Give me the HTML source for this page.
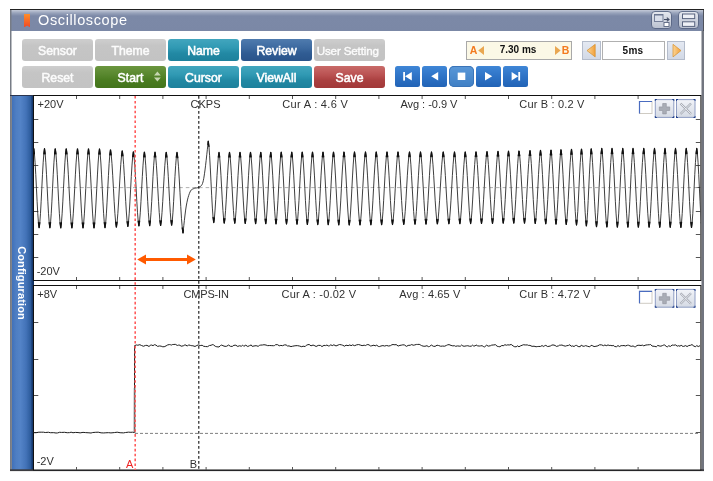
<!DOCTYPE html>
<html><head><meta charset="utf-8"><title>Oscilloscope</title>
<style>
html,body{margin:0;padding:0;background:#fff;}
body{width:713px;height:481px;position:relative;overflow:hidden;font-family:"Liberation Sans",sans-serif;}
.abs{position:absolute;}
#wrap{position:absolute;left:0;top:0;width:713px;height:481px;filter:blur(0.35px);}
#frame{position:absolute;left:10px;top:9px;width:693px;height:462px;background:#fff;}
#title{position:absolute;left:10px;top:9px;width:693px;height:21.5px;background:linear-gradient(#c4cad8 0px,#98a3bb 3px,#7c89a7 6px,#7b88a6 100%);border-top:1px solid #222;box-sizing:border-box;}
#title .txt{position:absolute;left:28px;top:1px;font-size:14.5px;color:#fff;line-height:18px;letter-spacing:0.62px;}
#ticon{position:absolute;left:14px;top:3.6px;width:6.2px;height:13.6px;background:linear-gradient(#ff8e2a,#f04a24);clip-path:polygon(0 0,100% 0,100% 100%,50% 90%,0 100%);}
.btn{position:absolute;width:71px;height:22px;border-radius:3px;color:#fff;font-weight:normal;-webkit-text-stroke:0.55px currentColor;font-size:12.25px;line-height:24px;text-align:center;box-sizing:border-box;}
.gray{background:linear-gradient(#cecece,#c5c5c5 30%,#c3c3c3);color:#fbfbfb;}
.teal{background:linear-gradient(#42a6be 0%,#3099b3 40%,#2289a4 65%,#1d819c 100%);}
.navy{background:linear-gradient(#4f7bae 0%,#3d6aa0 40%,#305c93 65%,#2a548a 100%);}
.green{background:linear-gradient(#6b963f 0%,#58872e 40%,#4a7c20 65%,#43741b 100%);}
.red{background:linear-gradient(#c96b69 0%,#ba5252 40%,#aa4040 65%,#a23838 100%);}
.pb{position:absolute;top:65.5px;width:25px;height:21.5px;border-radius:2.5px;background:linear-gradient(#3f86d6 0%,#2e73c6 50%,#2163b6 100%);}
.lbl{font-size:11px;fill:#303030;font-family:"Liberation Sans",sans-serif;}
</style></head><body>
<div id="wrap">
<div id="frame"></div>
<div id="title"><div id="ticon"></div><div class="txt">Oscilloscope</div></div>

<div class="btn gray" style="left:22px;top:39px">Sensor</div>
<div class="btn gray" style="left:95px;top:39px">Theme</div>
<div class="btn teal" style="left:168px;top:39px">Name</div>
<div class="btn navy" style="left:241px;top:39px">Review</div>
<div class="btn gray" style="left:314px;top:39px;font-size:11.6px;letter-spacing:-0.15px;padding-right:3.5px;-webkit-text-stroke:0.4px currentColor">User Setting</div>
<div class="btn gray" style="left:22px;top:65.5px">Reset</div>
<div class="btn green" style="left:95px;top:65.5px">Start</div>
<div class="btn teal" style="left:168px;top:65.5px">Cursor</div>
<div class="btn teal" style="left:241px;top:65.5px">ViewAll</div>
<div class="btn red" style="left:314px;top:65.5px">Save</div>

<div class="pb" style="left:394.5px"></div>
<div class="pb" style="left:421.8px"></div>
<div class="pb" style="left:449px;border-radius:5px;background:linear-gradient(#5a98d8,#3f7fc4);box-shadow:inset 0 0 0 1px #3a74b8"></div>
<div class="pb" style="left:476px"></div>
<div class="pb" style="left:503.3px"></div>

<div class="abs" style="left:466px;top:41px;width:106px;height:18.5px;box-sizing:border-box;border:1px solid #a9a9a9;background:#fbf8e6"></div>
<div class="abs" style="left:582px;top:41px;width:18.6px;height:18.8px;box-sizing:border-box;border:1px solid #b4bccb;background:linear-gradient(#e4e9f2,#d2d9e6)"></div>
<div class="abs" style="left:602px;top:41px;width:62.7px;height:18.8px;box-sizing:border-box;border:1px solid #b0b0b0;background:#fff"></div>
<div class="abs" style="left:666.8px;top:41px;width:18.6px;height:18.8px;box-sizing:border-box;border:1px solid #b4bccb;background:linear-gradient(#e4e9f2,#d2d9e6)"></div>
<div class="abs" style="left:469.7px;top:42.8px;font-size:10.5px;font-weight:bold;color:#f37a1f;line-height:14px">A</div>
<div class="abs" style="left:561.8px;top:42.8px;font-size:10.5px;font-weight:bold;color:#f37a1f;line-height:14px">B</div>
<div class="abs" style="left:499px;top:43px;width:38px;text-align:center;font-size:10px;font-weight:bold;color:#111;line-height:14px;white-space:nowrap">7.30 ms</div>
<div class="abs" style="left:602px;top:43.6px;width:62px;text-align:center;font-size:10px;font-weight:bold;color:#111;line-height:14px;letter-spacing:0.3px">5ms</div>

<!-- sidebar -->
<div class="abs" style="left:10px;top:95px;width:23.5px;height:376px;background:linear-gradient(90deg,#c4c4c6 0px,#74777e 2px,#4171b9 2.1px,#4e7ec3 6px,#5383c7 10.5px,#4373b8 16px,#2c5b9b 20.8px,#1b4079 21.8px,#0c2c5c 23.5px)"></div>
<div class="abs" style="left:22.3px;top:283.3px;width:0;height:0"><div style="position:absolute;left:-50px;top:-8px;width:100px;height:16px;line-height:16px;text-align:center;transform:rotate(90deg);color:#fff;font-weight:bold;font-size:11px;letter-spacing:0.12px;white-space:nowrap">Configuration</div></div>

<svg class="abs" style="left:0;top:0" width="713" height="481" viewBox="0 0 713 481">
<!-- title icons -->
<defs>
<linearGradient id="ig" x1="0" y1="0" x2="0" y2="1"><stop offset="0" stop-color="#e6e9f0"/><stop offset="0.5" stop-color="#cfd4df"/><stop offset="1" stop-color="#b9c0cf"/></linearGradient>
<linearGradient id="bg2" x1="0" y1="0" x2="0" y2="1"><stop offset="0" stop-color="#f2f4f9"/><stop offset="1" stop-color="#d5dae4"/></linearGradient>
<linearGradient id="og" x1="0" y1="0" x2="1" y2="0"><stop offset="0" stop-color="#fbd596"/><stop offset="1" stop-color="#f2a03a"/></linearGradient>
</defs>
<rect x="651.5" y="11.5" width="20" height="17" rx="3.5" fill="url(#ig)" stroke="#4a5878" stroke-width="0.8"/>
<rect x="678.5" y="11.5" width="20" height="17" rx="3.5" fill="url(#ig)" stroke="#4a5878" stroke-width="0.8"/>
<rect x="654.5" y="14.5" width="8.5" height="7" fill="#d9deea" stroke="#6a7590" stroke-width="0.9"/>
<rect x="654.5" y="14.2" width="8.5" height="1.3" fill="#6a7590"/>
<rect x="664" y="22.5" width="5" height="4" fill="#fff" stroke="#5a6580" stroke-width="0.9"/>
<path d="M664 19.5H668.5M666.8 17.6L669 19.5L666.8 21.4" stroke="#444e66" stroke-width="1.1" fill="none"/>
<rect x="682.5" y="14" width="12.2" height="4.6" fill="#eef0f6" stroke="#5a6580" stroke-width="1"/>
<rect x="682.5" y="21.8" width="12.2" height="4.6" fill="#eef0f6" stroke="#5a6580" stroke-width="1"/>

<!-- frame borders -->
<rect x="10" y="9" width="1.5" height="462" fill="#777c86"/>
<rect x="701.5" y="30.5" width="2.5" height="440.5" fill="#71757f"/><rect x="703" y="9" width="0.9" height="22" fill="#3a3e48"/>
<rect x="10" y="9" width="694" height="1" fill="#222"/>
<rect x="10" y="469.3" width="694" height="1.8" fill="#3c3c40"/>

<!-- playback glyphs -->
<g fill="#fff">
<rect x="403.2" y="72" width="1.8" height="8.6"/><path d="M411.8 72V80.6L405 76.3Z"/>
<path d="M438.2 72V80.6L431.2 76.3Z"/>
<rect x="457.7" y="72.6" width="7.6" height="7.4"/>
<path d="M485 72V80.6L492.2 76.3Z"/>
<path d="M511.6 72V80.6L518.2 76.3Z"/><rect x="518.3" y="72" width="1.8" height="8.6"/>
</g>
<!-- small triangles -->
<path d="M484 46V55L478.2 50.5Z" fill="#e9a752"/>
<path d="M555 46V55L560.6 50.5Z" fill="#e9a752"/>
<path d="M595.2 44.3V56.9L587 50.6Z" fill="url(#og)" stroke="#d6902e" stroke-width="0.7"/>
<path d="M673 44.3V56.9L681 50.6Z" fill="url(#og)" stroke="#d6902e" stroke-width="0.7"/>
<!-- start up/down -->
<path d="M154 75.5L157.4 71.5L160.8 75.5Z M154 77.5L157.4 81.5L160.8 77.5Z" fill="#c5d6b0"/>

<rect x="10" y="95" width="23.5" height="1" fill="#2a3550"/>
<!-- plots -->
<rect x="33.5" y="95.5" width="667.4" height="185" fill="#fff" stroke="#111" stroke-width="1"/>
<rect x="33.5" y="285.5" width="667.4" height="184.5" fill="#fff" stroke="#111" stroke-width="1"/>
<path d="M76.5 96V99M76.5 277V280M76.5 286V289M76.5 467V470M119.7 96V99M119.7 277V280M119.7 286V289M119.7 467V470M162.9 96V99M162.9 277V280M162.9 286V289M162.9 467V470M206.1 96V99M206.1 277V280M206.1 286V289M206.1 467V470M249.3 96V99M249.3 277V280M249.3 286V289M249.3 467V470M292.5 96V99M292.5 277V280M292.5 286V289M292.5 467V470M335.7 96V99M335.7 277V280M335.7 286V289M335.7 467V470M378.9 96V99M378.9 277V280M378.9 286V289M378.9 467V470M422.1 96V99M422.1 277V280M422.1 286V289M422.1 467V470M465.3 96V99M465.3 277V280M465.3 286V289M465.3 467V470M508.5 96V99M508.5 277V280M508.5 286V289M508.5 467V470M551.7 96V99M551.7 277V280M551.7 286V289M551.7 467V470M594.9 96V99M594.9 277V280M594.9 286V289M594.9 467V470M638.1 96V99M638.1 277V280M638.1 286V289M638.1 467V470M34 119.5H38.3M695.8 119.5H700.5M34 142.5H38.3M695.8 142.5H700.5M34 165.5H38.3M695.8 165.5H700.5M34 187.5H38.3M695.8 187.5H700.5M34 211.5H38.3M695.8 211.5H700.5M34 234.5H38.3M695.8 234.5H700.5M34 257.5H38.3M695.8 257.5H700.5M34 322.5H38.3M695.8 322.5H700.5M34 359.5H38.3M695.8 359.5H700.5M34 395.5H38.3M695.8 395.5H700.5M34 432.5H38.3M695.8 432.5H700.5" stroke="#555" stroke-width="1" fill="none"/>
<path d="M34 187.6H700" stroke="#a8a8a8" stroke-width="0.9" stroke-dasharray="3.6 3" fill="none"/>
<path d="M135 433.4H700" stroke="#606060" stroke-width="0.8" stroke-dasharray="3 2" fill="none"/>

<clipPath id="c1"><rect x="33.5" y="96" width="667" height="184"/></clipPath>
<path d="M22.90 149.00 L23.57 154.04 L24.25 162.93 L24.93 174.79 L25.60 188.25 L26.27 201.71 L26.95 213.57 L27.62 222.46 L28.30 227.50 L28.98 222.44 L29.66 213.51 L30.34 201.60 L31.02 188.08 L31.71 174.57 L32.39 162.66 L33.07 153.73 L33.75 148.67 L34.42 153.74 L35.09 162.70 L35.77 174.63 L36.44 188.18 L37.11 201.73 L37.78 213.67 L38.45 222.63 L39.12 227.70 L39.80 222.63 L40.47 213.68 L41.14 201.75 L41.81 188.21 L42.48 174.67 L43.16 162.74 L43.83 153.79 L44.50 148.72 L45.17 153.79 L45.84 162.75 L46.52 174.69 L47.19 188.24 L47.86 201.78 L48.53 213.72 L49.20 222.68 L49.88 227.75 L50.55 222.68 L51.22 213.73 L51.89 201.80 L52.56 188.26 L53.23 174.72 L53.91 162.79 L54.58 153.84 L55.25 148.78 L55.94 153.85 L56.62 162.80 L57.31 174.74 L58.00 188.29 L58.69 201.84 L59.38 213.78 L60.06 222.73 L60.75 227.80 L61.44 222.74 L62.12 213.79 L62.81 201.86 L63.50 188.32 L64.19 174.78 L64.88 162.85 L65.56 153.90 L66.25 148.83 L66.95 153.90 L67.66 162.86 L68.36 174.80 L69.06 188.35 L69.77 201.89 L70.47 213.83 L71.17 222.79 L71.88 227.86 L72.58 222.79 L73.28 213.84 L73.98 201.91 L74.69 188.37 L75.39 174.83 L76.09 162.91 L76.80 153.95 L77.50 148.89 L78.19 153.96 L78.88 162.92 L79.56 174.85 L80.25 188.40 L80.94 201.95 L81.62 213.89 L82.31 222.85 L83.00 227.91 L83.69 222.85 L84.38 213.90 L85.06 201.97 L85.75 188.43 L86.44 174.89 L87.12 162.96 L87.81 154.01 L88.50 148.94 L89.19 154.01 L89.88 162.97 L90.56 174.91 L91.25 188.46 L91.94 202.00 L92.62 213.94 L93.31 222.90 L94.00 227.97 L94.69 222.90 L95.38 213.95 L96.06 202.02 L96.75 188.48 L97.44 174.94 L98.12 163.02 L98.81 154.06 L99.50 149.00 L100.19 154.05 L100.88 162.97 L101.56 174.86 L102.25 188.36 L102.94 201.85 L103.62 213.74 L104.31 222.67 L105.00 227.71 L105.69 222.72 L106.38 213.90 L107.06 202.15 L107.75 188.81 L108.44 175.47 L109.12 163.71 L109.81 154.89 L110.50 149.90 L111.23 154.85 L111.97 163.60 L112.70 175.25 L113.44 188.48 L114.17 201.71 L114.91 213.37 L115.64 222.11 L116.38 227.06 L117.11 222.18 L117.84 213.55 L118.58 202.04 L119.31 188.99 L120.05 175.93 L120.78 164.43 L121.52 155.79 L122.25 150.91 L122.95 155.75 L123.64 164.31 L124.34 175.71 L125.04 188.66 L125.73 201.60 L126.43 213.01 L127.13 221.57 L127.83 226.41 L128.52 221.63 L129.22 213.18 L129.92 201.92 L130.61 189.14 L131.31 176.36 L132.01 165.10 L132.70 156.64 L133.40 151.86 L134.09 156.61 L134.78 165.01 L135.46 176.19 L136.15 188.89 L136.84 201.58 L137.53 212.77 L138.21 221.16 L138.90 225.91 L139.59 221.18 L140.28 212.81 L140.96 201.66 L141.65 189.01 L142.34 176.36 L143.03 165.21 L143.71 156.84 L144.40 152.10 L145.06 156.82 L145.72 165.16 L146.39 176.28 L147.05 188.89 L147.71 201.50 L148.38 212.61 L149.04 220.95 L149.70 225.67 L150.36 220.96 L151.02 212.63 L151.69 201.54 L152.35 188.95 L153.01 176.36 L153.68 165.26 L154.34 156.93 L155.00 152.22 L155.70 156.92 L156.41 165.22 L157.11 176.28 L157.81 188.83 L158.52 201.38 L159.22 212.44 L159.92 220.73 L160.62 225.43 L161.33 220.74 L162.03 212.46 L162.73 201.42 L163.44 188.89 L164.14 176.36 L164.84 165.32 L165.55 157.03 L166.25 152.35 L166.92 157.02 L167.59 165.28 L168.27 176.28 L168.94 188.77 L169.61 201.25 L170.28 212.26 L170.95 220.51 L171.62 225.19 L172.30 220.52 L172.97 212.28 L173.64 201.29 L174.31 188.83 L174.98 176.36 L175.66 165.38 L176.33 157.13 L177.00 152.47 L177.75 157.66 L178.50 166.79 L179.25 178.95 L180.00 192.75 L180.75 206.55 L181.50 218.71 L182.25 227.84 L183.00 233.00 L183.35 229.91 L183.82 225.52 L184.39 220.38 L185.01 215.04 L185.64 210.06 L186.25 206.00 L186.85 202.79 L187.46 199.98 L188.09 197.53 L188.73 195.40 L189.37 193.57 L190.00 192.00 L190.61 190.80 L191.20 190.00 L191.80 189.51 L192.41 189.19 L193.05 188.92 L193.75 188.60 L194.53 188.29 L195.37 188.10 L196.25 187.98 L197.13 187.84 L197.97 187.64 L198.75 187.30 L199.46 186.92 L200.14 186.58 L200.78 186.16 L201.39 185.58 L201.96 184.72 L202.50 183.50 L202.98 181.99 L203.40 180.28 L203.78 178.31 L204.16 175.99 L204.55 173.24 L205.00 170.00 L205.54 165.76 L206.15 160.48 L206.78 154.78 L207.38 149.27 L207.89 144.55 L208.25 141.25 L208.94 146.46 L209.62 155.67 L210.31 167.95 L211.00 181.88 L211.69 195.80 L212.38 208.08 L213.06 217.29 L213.75 222.50 L214.41 218.01 L215.06 210.07 L215.72 199.50 L216.38 187.50 L217.03 175.50 L217.69 164.93 L218.34 156.99 L219.00 152.50 L219.66 157.03 L220.31 165.03 L220.97 175.69 L221.62 187.78 L222.28 199.88 L222.94 210.54 L223.59 218.54 L224.25 223.07 L224.91 218.54 L225.56 210.53 L226.22 199.87 L226.88 187.76 L227.53 175.66 L228.19 165.00 L228.84 156.99 L229.50 152.46 L230.16 157.00 L230.81 165.02 L231.47 175.71 L232.12 187.85 L232.78 199.98 L233.44 210.67 L234.09 218.69 L234.75 223.23 L235.41 218.69 L236.06 210.66 L236.72 199.96 L237.38 187.83 L238.03 175.69 L238.69 164.99 L239.34 156.96 L240.00 152.42 L240.66 156.97 L241.31 165.02 L241.97 175.74 L242.62 187.91 L243.28 200.07 L243.94 210.79 L244.59 218.84 L245.25 223.39 L245.91 218.83 L246.56 210.78 L247.22 200.06 L247.88 187.89 L248.53 175.71 L249.19 164.99 L249.84 156.94 L250.50 152.38 L251.14 156.95 L251.78 165.02 L252.42 175.76 L253.06 187.97 L253.70 200.17 L254.34 210.92 L254.98 218.98 L255.62 223.55 L256.27 218.98 L256.91 210.91 L257.55 200.15 L258.19 187.95 L258.83 175.74 L259.47 164.98 L260.11 156.91 L260.75 152.34 L261.38 156.92 L262.00 165.01 L262.62 175.79 L263.25 188.02 L263.88 200.26 L264.50 211.04 L265.12 219.13 L265.75 223.70 L266.38 219.12 L267.00 211.03 L267.62 200.24 L268.25 188.00 L268.88 175.76 L269.50 164.98 L270.12 156.88 L270.75 152.30 L271.41 156.89 L272.06 165.01 L272.72 175.82 L273.38 188.08 L274.03 200.35 L274.69 211.16 L275.34 219.27 L276.00 223.86 L276.66 219.27 L277.31 211.15 L277.97 200.34 L278.62 188.06 L279.28 175.79 L279.94 164.97 L280.59 156.86 L281.25 152.26 L281.91 156.87 L282.56 165.00 L283.22 175.84 L283.88 188.14 L284.53 200.45 L285.19 211.29 L285.84 219.42 L286.50 224.02 L287.16 219.42 L287.81 211.28 L288.47 200.43 L289.12 188.12 L289.78 175.81 L290.44 164.97 L291.09 156.83 L291.75 152.22 L292.41 156.84 L293.06 165.00 L293.72 175.87 L294.38 188.20 L295.03 200.54 L295.69 211.41 L296.34 219.57 L297.00 224.18 L297.66 219.57 L298.31 211.40 L298.97 200.53 L299.62 188.18 L300.28 175.84 L300.94 164.96 L301.59 156.80 L302.25 152.18 L302.89 156.81 L303.53 164.99 L304.17 175.89 L304.81 188.26 L305.45 200.64 L306.09 211.53 L306.73 219.72 L307.38 224.34 L308.02 219.71 L308.66 211.53 L309.30 200.62 L309.94 188.24 L310.58 175.87 L311.22 164.96 L311.86 156.78 L312.50 152.14 L313.16 156.79 L313.81 164.99 L314.47 175.92 L315.12 188.32 L315.78 200.73 L316.44 211.66 L317.09 219.86 L317.75 224.50 L318.41 219.86 L319.06 211.65 L319.72 200.72 L320.38 188.30 L321.03 175.89 L321.69 164.96 L322.34 156.75 L323.00 152.10 L323.66 156.76 L324.31 164.98 L324.97 175.94 L325.62 188.38 L326.28 200.82 L326.94 211.78 L327.59 220.01 L328.25 224.67 L328.91 220.01 L329.56 211.78 L330.22 200.81 L330.88 188.36 L331.53 175.92 L332.19 164.95 L332.84 156.72 L333.50 152.06 L334.16 156.73 L334.81 164.98 L335.47 175.97 L336.12 188.45 L336.78 200.92 L337.44 211.91 L338.09 220.16 L338.75 224.83 L339.41 220.16 L340.06 211.90 L340.72 200.91 L341.38 188.43 L342.03 175.94 L342.69 164.95 L343.34 156.69 L344.00 152.02 L344.66 156.70 L345.31 164.98 L345.97 176.00 L346.62 188.51 L347.28 201.01 L347.94 212.04 L348.59 220.31 L349.25 224.99 L349.91 220.31 L350.56 212.03 L351.22 201.01 L351.88 188.49 L352.53 175.98 L353.19 164.96 L353.84 156.68 L354.50 152.00 L355.19 156.67 L355.88 164.94 L356.56 175.94 L357.25 188.44 L357.94 200.93 L358.62 211.94 L359.31 220.20 L360.00 224.88 L360.69 220.20 L361.38 211.94 L362.06 200.93 L362.75 188.44 L363.44 175.94 L364.12 164.94 L364.81 156.67 L365.50 152.00 L366.17 156.67 L366.84 164.91 L367.52 175.90 L368.19 188.37 L368.86 200.84 L369.53 211.83 L370.20 220.07 L370.88 224.74 L371.55 220.07 L372.22 211.83 L372.89 200.84 L373.56 188.37 L374.23 175.90 L374.91 164.91 L375.58 156.67 L376.25 152.00 L376.92 156.66 L377.59 164.89 L378.27 175.86 L378.94 188.30 L379.61 200.75 L380.28 211.72 L380.95 219.95 L381.62 224.60 L382.30 219.95 L382.97 211.72 L383.64 200.75 L384.31 188.30 L384.98 175.86 L385.66 164.89 L386.33 156.66 L387.00 152.00 L387.69 156.65 L388.38 164.86 L389.06 175.81 L389.75 188.23 L390.44 200.66 L391.12 211.60 L391.81 219.82 L392.50 224.47 L393.19 219.82 L393.88 211.60 L394.56 200.66 L395.25 188.23 L395.94 175.81 L396.62 164.86 L397.31 156.65 L398.00 152.00 L398.72 156.64 L399.44 164.84 L400.16 175.76 L400.88 188.16 L401.59 200.56 L402.31 211.49 L403.03 219.69 L403.75 224.33 L404.47 219.69 L405.19 211.49 L405.91 200.56 L406.62 188.16 L407.34 175.76 L408.06 164.84 L408.78 156.64 L409.50 152.00 L410.19 156.63 L410.88 164.81 L411.56 175.72 L412.25 188.09 L412.94 200.47 L413.62 211.37 L414.31 219.56 L415.00 224.19 L415.69 219.56 L416.38 211.37 L417.06 200.47 L417.75 188.09 L418.44 175.72 L419.12 164.81 L419.81 156.63 L420.50 152.00 L421.19 156.62 L421.88 164.79 L422.56 175.67 L423.25 188.03 L423.94 200.38 L424.62 211.26 L425.31 219.43 L426.00 224.05 L426.69 219.43 L427.38 211.26 L428.06 200.38 L428.75 188.03 L429.44 175.67 L430.12 164.79 L430.81 156.62 L431.50 152.00 L432.23 156.61 L432.97 164.76 L433.70 175.63 L434.44 187.95 L435.17 200.28 L435.91 211.14 L436.64 219.30 L437.38 223.91 L438.11 219.30 L438.84 211.14 L439.58 200.28 L440.31 187.95 L441.05 175.63 L441.78 164.76 L442.52 156.61 L443.25 152.00 L443.95 156.60 L444.66 164.74 L445.36 175.58 L446.06 187.88 L446.77 200.19 L447.47 211.03 L448.17 219.16 L448.88 223.76 L449.58 219.16 L450.28 211.03 L450.98 200.19 L451.69 187.88 L452.39 175.58 L453.09 164.74 L453.80 156.60 L454.50 152.00 L455.17 156.59 L455.84 164.71 L456.52 175.53 L457.19 187.81 L457.86 200.09 L458.53 210.91 L459.20 219.03 L459.88 223.63 L460.55 219.03 L461.22 210.91 L461.89 200.09 L462.56 187.81 L463.23 175.53 L463.91 164.71 L464.58 156.59 L465.25 152.00 L465.92 156.59 L466.59 164.69 L467.27 175.49 L467.94 187.75 L468.61 200.00 L469.28 210.80 L469.95 218.91 L470.62 223.49 L471.30 218.90 L471.97 210.78 L472.64 199.96 L473.31 187.69 L473.98 175.41 L474.66 164.59 L475.33 156.47 L476.00 151.88 L476.69 156.47 L477.38 164.57 L478.06 175.37 L478.75 187.63 L479.44 199.89 L480.12 210.69 L480.81 218.80 L481.50 223.38 L482.19 218.78 L482.88 210.65 L483.56 199.82 L484.25 187.52 L484.94 175.23 L485.62 164.39 L486.31 156.26 L487.00 151.66 L487.69 156.25 L488.38 164.37 L489.06 175.19 L489.75 187.47 L490.44 199.75 L491.12 210.56 L491.81 218.68 L492.50 223.28 L493.19 218.67 L493.88 210.52 L494.56 199.67 L495.25 187.36 L495.94 175.04 L496.62 164.19 L497.31 156.05 L498.00 151.44 L498.66 156.04 L499.31 164.17 L499.97 175.01 L500.62 187.30 L501.28 199.60 L501.94 210.43 L502.59 218.57 L503.25 223.17 L503.91 218.55 L504.56 210.40 L505.22 199.53 L505.88 187.20 L506.53 174.87 L507.19 164.00 L507.84 155.84 L508.50 151.23 L509.16 155.84 L509.81 163.98 L510.47 174.83 L511.12 187.15 L511.78 199.46 L512.44 210.31 L513.09 218.46 L513.75 223.06 L514.41 218.44 L515.06 210.27 L515.72 199.39 L516.38 187.04 L517.03 174.69 L517.69 163.81 L518.34 155.64 L519.00 151.02 L519.69 155.65 L520.38 163.82 L521.06 174.71 L521.75 187.08 L522.44 199.44 L523.12 210.33 L523.81 218.51 L524.50 223.13 L525.19 218.49 L525.88 210.28 L526.56 199.34 L527.25 186.92 L527.94 174.50 L528.62 163.56 L529.31 155.35 L530.00 150.70 L530.66 155.37 L531.31 163.62 L531.97 174.61 L532.62 187.08 L533.28 199.55 L533.94 210.54 L534.59 218.79 L535.25 223.46 L535.91 218.77 L536.56 210.49 L537.22 199.45 L537.88 186.92 L538.53 174.39 L539.19 163.36 L539.84 155.07 L540.50 150.38 L541.16 155.09 L541.81 163.41 L542.47 174.50 L543.12 187.08 L543.78 199.66 L544.44 210.75 L545.09 219.07 L545.75 223.77 L546.41 219.05 L547.06 210.69 L547.72 199.56 L548.38 186.92 L549.03 174.29 L549.69 163.15 L550.34 154.80 L551.00 150.07 L551.62 154.82 L552.25 163.21 L552.88 174.39 L553.50 187.07 L554.12 199.76 L554.75 210.94 L555.38 219.33 L556.00 224.08 L556.62 219.31 L557.25 210.89 L557.88 199.66 L558.50 186.93 L559.12 174.19 L559.75 162.96 L560.38 154.54 L561.00 149.77 L561.66 154.56 L562.31 163.02 L562.97 174.29 L563.62 187.08 L564.28 199.87 L564.94 211.14 L565.59 219.60 L566.25 224.39 L566.91 219.58 L567.56 211.09 L568.22 199.77 L568.88 186.92 L569.53 174.07 L570.19 162.75 L570.84 154.26 L571.50 149.45 L572.12 154.30 L572.75 162.87 L573.38 174.29 L574.00 187.25 L574.62 200.21 L575.25 211.62 L575.88 220.19 L576.50 225.04 L577.12 220.17 L577.75 211.56 L578.38 200.10 L579.00 187.08 L579.62 174.06 L580.25 162.59 L580.88 153.99 L581.50 149.12 L582.11 154.04 L582.72 162.74 L583.33 174.33 L583.94 187.49 L584.55 200.65 L585.16 212.24 L585.77 220.94 L586.38 225.86 L586.98 220.92 L587.59 212.18 L588.20 200.54 L588.81 187.33 L589.42 174.11 L590.03 162.47 L590.64 153.74 L591.25 148.79 L591.91 153.79 L592.56 162.62 L593.22 174.39 L593.88 187.75 L594.53 201.11 L595.19 212.88 L595.84 221.71 L596.50 226.71 L597.16 221.69 L597.81 212.83 L598.47 201.01 L599.12 187.60 L599.78 174.20 L600.44 162.38 L601.09 153.52 L601.75 148.50 L602.39 153.54 L603.03 162.44 L603.67 174.30 L604.31 187.76 L604.95 201.23 L605.59 213.09 L606.23 221.99 L606.88 227.03 L607.52 221.99 L608.16 213.09 L608.80 201.23 L609.44 187.76 L610.08 174.30 L610.72 162.44 L611.36 153.54 L612.00 148.50 L612.67 153.54 L613.34 162.45 L614.02 174.32 L614.69 187.79 L615.36 201.26 L616.03 213.12 L616.70 222.03 L617.38 227.07 L618.05 222.03 L618.72 213.12 L619.39 201.26 L620.06 187.79 L620.73 174.32 L621.41 162.45 L622.08 153.54 L622.75 148.50 L623.39 153.54 L624.03 162.46 L624.67 174.33 L625.31 187.81 L625.95 201.29 L626.59 213.16 L627.23 222.07 L627.88 227.12 L628.52 222.07 L629.16 213.16 L629.80 201.29 L630.44 187.81 L631.08 174.33 L631.72 162.46 L632.36 153.54 L633.00 148.50 L633.67 153.55 L634.34 162.46 L635.02 174.34 L635.69 187.83 L636.36 201.32 L637.03 213.20 L637.70 222.11 L638.38 227.16 L639.05 222.11 L639.72 213.20 L640.39 201.32 L641.06 187.83 L641.73 174.34 L642.41 162.46 L643.08 153.55 L643.75 148.50 L644.42 153.55 L645.09 162.47 L645.77 174.36 L646.44 187.85 L647.11 201.35 L647.78 213.23 L648.45 222.16 L649.12 227.20 L649.80 222.16 L650.47 213.23 L651.14 201.35 L651.81 187.85 L652.48 174.36 L653.16 162.47 L653.83 153.55 L654.50 148.50 L655.16 153.55 L655.81 162.48 L656.47 174.37 L657.12 187.87 L657.78 201.38 L658.44 213.27 L659.09 222.20 L659.75 227.25 L660.41 222.20 L661.06 213.27 L661.72 201.38 L662.38 187.87 L663.03 174.37 L663.69 162.48 L664.34 153.55 L665.00 148.50 L665.66 153.55 L666.31 162.49 L666.97 174.39 L667.62 187.90 L668.28 201.40 L668.94 213.31 L669.59 222.24 L670.25 227.29 L670.91 222.24 L671.56 213.31 L672.22 201.40 L672.88 187.90 L673.53 174.39 L674.19 162.49 L674.84 153.55 L675.50 148.50 L676.17 153.56 L676.84 162.49 L677.52 174.40 L678.19 187.92 L678.86 201.43 L679.53 213.34 L680.20 222.28 L680.88 227.34 L681.55 222.28 L682.22 213.34 L682.89 201.43 L683.56 187.92 L684.23 174.40 L684.91 162.49 L685.58 153.56 L686.25 148.50 L686.91 153.56 L687.56 162.50 L688.22 174.42 L688.88 187.94 L689.53 201.46 L690.19 213.38 L690.84 222.32 L691.50 227.38 L692.16 222.32 L692.81 213.38 L693.47 201.46 L694.12 187.94 L694.78 174.42 L695.44 162.50 L696.09 153.56 L696.75 148.50 L697.41 153.56 L698.07 162.51 L698.73 174.43 L699.39 187.96 L700.05 201.49 L700.71 213.41 L701.37 222.36 L702.02 227.43 L702.68 222.36 L703.34 213.41 L704.00 201.49 L704.66 187.96 L705.32 174.43 L705.98 162.51 L706.64 153.56 L707.30 148.50" clip-path="url(#c1)" stroke="#242424" stroke-width="0.88" fill="none" stroke-linejoin="round"/>
<path d="M27.62 222.46L28.30 227.50L28.98 222.44M33.07 153.73L33.75 148.67L34.42 153.74M38.45 222.63L39.12 227.70L39.80 222.63M43.83 153.79L44.50 148.72L45.17 153.79M49.20 222.68L49.88 227.75L50.55 222.68M54.58 153.84L55.25 148.78L55.94 153.85M60.06 222.73L60.75 227.80L61.44 222.74M65.56 153.90L66.25 148.83L66.95 153.90M71.17 222.79L71.88 227.86L72.58 222.79M76.80 153.95L77.50 148.89L78.19 153.96M82.31 222.85L83.00 227.91L83.69 222.85M87.81 154.01L88.50 148.94L89.19 154.01M93.31 222.90L94.00 227.97L94.69 222.90M98.81 154.06L99.50 149.00L100.19 154.05M104.31 222.67L105.00 227.71L105.69 222.72M109.81 154.89L110.50 149.90L111.23 154.85M115.64 222.11L116.38 227.06L117.11 222.18M121.52 155.79L122.25 150.91L122.95 155.75M127.13 221.57L127.83 226.41L128.52 221.63M132.70 156.64L133.40 151.86L134.09 156.61M138.21 221.16L138.90 225.91L139.59 221.18M143.71 156.84L144.40 152.10L145.06 156.82M149.04 220.95L149.70 225.67L150.36 220.96M154.34 156.93L155.00 152.22L155.70 156.92M159.92 220.73L160.62 225.43L161.33 220.74M165.55 157.03L166.25 152.35L166.92 157.02M170.95 220.51L171.62 225.19L172.30 220.52M176.33 157.13L177.00 152.47L177.75 157.66M182.25 227.84L183.00 233.00L183.35 229.91M207.89 144.55L208.25 141.25L208.94 146.46M213.06 217.29L213.75 222.50L214.41 218.01M218.34 156.99L219.00 152.50L219.66 157.03M223.59 218.54L224.25 223.07L224.91 218.54M228.84 156.99L229.50 152.46L230.16 157.00M234.09 218.69L234.75 223.23L235.41 218.69M239.34 156.96L240.00 152.42L240.66 156.97M244.59 218.84L245.25 223.39L245.91 218.83M249.84 156.94L250.50 152.38L251.14 156.95M254.98 218.98L255.62 223.55L256.27 218.98M260.11 156.91L260.75 152.34L261.38 156.92M265.12 219.13L265.75 223.70L266.38 219.12M270.12 156.88L270.75 152.30L271.41 156.89M275.34 219.27L276.00 223.86L276.66 219.27M280.59 156.86L281.25 152.26L281.91 156.87M285.84 219.42L286.50 224.02L287.16 219.42M291.09 156.83L291.75 152.22L292.41 156.84M296.34 219.57L297.00 224.18L297.66 219.57M301.59 156.80L302.25 152.18L302.89 156.81M306.73 219.72L307.38 224.34L308.02 219.71M311.86 156.78L312.50 152.14L313.16 156.79M317.09 219.86L317.75 224.50L318.41 219.86M322.34 156.75L323.00 152.10L323.66 156.76M327.59 220.01L328.25 224.67L328.91 220.01M332.84 156.72L333.50 152.06L334.16 156.73M338.09 220.16L338.75 224.83L339.41 220.16M343.34 156.69L344.00 152.02L344.66 156.70M348.59 220.31L349.25 224.99L349.91 220.31M353.84 156.68L354.50 152.00L355.19 156.67M359.31 220.20L360.00 224.88L360.69 220.20M364.81 156.67L365.50 152.00L366.17 156.67M370.20 220.07L370.88 224.74L371.55 220.07M375.58 156.67L376.25 152.00L376.92 156.66M380.95 219.95L381.62 224.60L382.30 219.95M386.33 156.66L387.00 152.00L387.69 156.65M391.81 219.82L392.50 224.47L393.19 219.82M397.31 156.65L398.00 152.00L398.72 156.64M403.03 219.69L403.75 224.33L404.47 219.69M408.78 156.64L409.50 152.00L410.19 156.63M414.31 219.56L415.00 224.19L415.69 219.56M419.81 156.63L420.50 152.00L421.19 156.62M425.31 219.43L426.00 224.05L426.69 219.43M430.81 156.62L431.50 152.00L432.23 156.61M436.64 219.30L437.38 223.91L438.11 219.30M442.52 156.61L443.25 152.00L443.95 156.60M448.17 219.16L448.88 223.76L449.58 219.16M453.80 156.60L454.50 152.00L455.17 156.59M459.20 219.03L459.88 223.63L460.55 219.03M464.58 156.59L465.25 152.00L465.92 156.59M469.95 218.91L470.62 223.49L471.30 218.90M475.33 156.47L476.00 151.88L476.69 156.47M480.81 218.80L481.50 223.38L482.19 218.78M486.31 156.26L487.00 151.66L487.69 156.25M491.81 218.68L492.50 223.28L493.19 218.67M497.31 156.05L498.00 151.44L498.66 156.04M502.59 218.57L503.25 223.17L503.91 218.55M507.84 155.84L508.50 151.23L509.16 155.84M513.09 218.46L513.75 223.06L514.41 218.44M518.34 155.64L519.00 151.02L519.69 155.65M523.81 218.51L524.50 223.13L525.19 218.49M529.31 155.35L530.00 150.70L530.66 155.37M534.59 218.79L535.25 223.46L535.91 218.77M539.84 155.07L540.50 150.38L541.16 155.09M545.09 219.07L545.75 223.77L546.41 219.05M550.34 154.80L551.00 150.07L551.62 154.82M555.38 219.33L556.00 224.08L556.62 219.31M560.38 154.54L561.00 149.77L561.66 154.56M565.59 219.60L566.25 224.39L566.91 219.58M570.84 154.26L571.50 149.45L572.12 154.30M575.88 220.19L576.50 225.04L577.12 220.17M580.88 153.99L581.50 149.12L582.11 154.04M585.77 220.94L586.38 225.86L586.98 220.92M590.64 153.74L591.25 148.79L591.91 153.79M595.84 221.71L596.50 226.71L597.16 221.69M601.09 153.52L601.75 148.50L602.39 153.54M606.23 221.99L606.88 227.03L607.52 221.99M611.36 153.54L612.00 148.50L612.67 153.54M616.70 222.03L617.38 227.07L618.05 222.03M622.08 153.54L622.75 148.50L623.39 153.54M627.23 222.07L627.88 227.12L628.52 222.07M632.36 153.54L633.00 148.50L633.67 153.55M637.70 222.11L638.38 227.16L639.05 222.11M643.08 153.55L643.75 148.50L644.42 153.55M648.45 222.16L649.12 227.20L649.80 222.16M653.83 153.55L654.50 148.50L655.16 153.55M659.09 222.20L659.75 227.25L660.41 222.20M664.34 153.55L665.00 148.50L665.66 153.55M669.59 222.24L670.25 227.29L670.91 222.24M674.84 153.55L675.50 148.50L676.17 153.56M680.20 222.28L680.88 227.34L681.55 222.28M685.58 153.56L686.25 148.50L686.91 153.56M690.84 222.32L691.50 227.38L692.16 222.32M696.09 153.56L696.75 148.50L697.41 153.56M701.37 222.36L702.02 227.43L702.68 222.36" clip-path="url(#c1)" stroke="#101010" stroke-width="1.3" fill="none" stroke-linejoin="round" stroke-linecap="round"/>
<path d="M33.00 432.44 L34.80 432.74 L36.45 432.63 L38.68 432.20 L41.19 432.18 L43.56 432.21 L45.24 432.53 L48.40 432.26 L50.34 432.71 L53.74 432.67 L56.03 433.03 L57.62 432.92 L59.70 432.28 L61.44 432.43 L64.57 432.31 L67.23 432.73 L69.48 432.64 L71.10 432.20 L73.02 432.76 L75.37 432.43 L78.04 432.56 L80.14 432.86 L83.04 432.37 L85.69 432.62 L88.94 432.81 L91.02 433.03 L92.75 432.53 L95.77 432.29 L98.24 432.19 L101.08 432.84 L103.73 432.94 L105.85 432.78 L108.54 432.67 L110.95 432.91 L114.34 432.58 L117.17 432.20 L120.08 432.73 L123.56 432.89 L125.63 432.50 L128.47 432.17 L130.89 432.30 L132.63 432.20 L134.40 432.60 L134.60 345.60 L136.50 344.96 L137.80 345.22 L139.84 344.69 L141.38 345.45 L143.44 346.25 L145.48 345.45 L146.98 345.33 L149.04 346.49 L150.22 345.33 L151.50 345.04 L153.08 345.65 L154.39 344.69 L155.90 345.08 L157.58 346.39 L159.41 345.97 L161.15 346.15 L162.21 346.66 L164.15 346.78 L166.11 345.86 L167.58 344.96 L169.34 344.57 L170.43 344.72 L171.62 345.04 L172.68 344.47 L173.87 344.47 L175.30 344.32 L177.35 345.45 L178.53 345.12 L179.95 345.22 L181.09 346.23 L183.28 345.82 L184.87 344.91 L185.99 345.11 L187.31 346.15 L188.50 344.90 L190.64 345.48 L191.82 345.71 L192.85 345.76 L195.02 346.45 L196.86 345.48 L198.30 344.96 L200.23 345.51 L202.16 345.29 L203.43 346.18 L205.61 346.57 L207.58 346.64 L209.46 345.48 L211.09 345.34 L212.12 344.63 L213.46 344.84 L215.29 346.31 L216.82 346.79 L219.01 346.99 L220.45 345.59 L221.72 345.06 L222.96 345.72 L225.04 346.39 L226.62 346.25 L228.58 345.06 L230.37 346.30 L232.31 346.41 L233.88 345.31 L235.83 345.23 L237.79 346.48 L239.27 345.77 L241.40 346.18 L242.61 345.12 L243.79 346.31 L245.76 345.20 L247.75 346.49 L249.54 345.68 L251.20 344.95 L252.21 346.38 L253.99 345.99 L256.11 345.67 L258.16 346.34 L259.41 345.43 L260.76 345.09 L262.47 345.00 L263.97 344.72 L266.06 345.06 L267.61 345.64 L269.70 345.52 L271.80 345.64 L273.44 345.73 L274.46 345.59 L275.68 344.67 L277.64 344.68 L279.21 345.79 L280.87 345.39 L282.50 345.70 L284.44 344.91 L286.11 344.92 L287.44 345.97 L289.05 345.92 L290.96 346.60 L292.50 346.24 L294.10 345.91 L295.93 345.68 L297.57 345.65 L299.70 346.08 L301.75 346.72 L303.07 346.18 L305.20 346.55 L306.36 345.24 L307.89 344.68 L309.18 344.49 L310.99 345.84 L313.06 345.06 L314.92 345.80 L316.09 346.50 L318.25 345.42 L320.40 345.40 L321.98 346.57 L323.98 345.33 L325.50 345.60 L326.91 345.06 L328.29 345.92 L329.31 345.88 L330.84 344.80 L332.24 345.63 L333.85 344.81 L336.03 345.96 L338.20 345.00 L339.52 344.53 L341.45 344.83 L342.61 345.24 L344.70 346.18 L346.01 345.17 L348.12 345.65 L349.96 344.86 L351.03 345.78 L352.54 344.87 L354.66 345.68 L356.62 344.86 L358.65 344.54 L360.69 345.20 L362.09 345.63 L364.21 345.21 L365.36 345.58 L366.65 344.88 L367.84 344.51 L369.08 344.91 L370.45 345.94 L371.80 345.78 L373.01 345.42 L374.03 345.10 L375.05 345.96 L376.71 345.17 L378.28 346.38 L379.41 346.58 L380.93 346.00 L382.93 345.59 L384.54 346.04 L386.72 345.50 L388.71 346.04 L390.48 345.63 L391.89 344.78 L393.05 344.52 L394.94 344.80 L396.14 344.55 L398.15 346.04 L399.95 345.38 L401.24 345.18 L402.79 344.83 L404.33 344.92 L406.48 346.37 L408.14 345.42 L410.30 345.22 L411.72 344.54 L413.18 345.24 L414.79 344.94 L416.39 344.44 L417.71 344.44 L419.19 344.34 L420.21 344.83 L421.49 345.57 L423.13 346.15 L424.92 346.29 L426.97 345.69 L428.36 346.66 L429.54 346.49 L431.32 345.06 L433.32 346.26 L435.07 346.36 L437.05 345.21 L438.67 345.54 L440.68 346.25 L442.67 346.06 L444.74 346.19 L446.57 345.33 L447.61 344.84 L449.04 344.61 L451.04 345.43 L452.80 345.86 L454.61 345.73 L455.62 346.31 L457.52 345.92 L459.16 346.10 L460.24 346.31 L461.54 345.06 L462.86 345.94 L464.10 346.26 L466.28 345.88 L467.73 345.72 L469.56 346.24 L471.30 346.18 L472.39 345.16 L473.69 346.00 L475.06 345.94 L476.07 344.91 L477.40 345.77 L479.23 346.07 L480.58 345.86 L482.13 345.69 L483.28 346.48 L484.51 346.93 L486.64 345.17 L488.19 346.15 L490.35 345.76 L491.67 345.14 L493.81 344.93 L495.51 344.71 L497.13 346.26 L498.29 346.54 L499.90 346.77 L501.75 345.54 L503.83 345.61 L504.86 344.68 L506.45 345.24 L507.81 344.82 L509.22 345.02 L511.23 344.47 L513.13 345.95 L514.27 346.64 L516.13 346.83 L517.48 345.84 L518.95 346.75 L520.66 345.79 L522.17 345.28 L523.23 344.76 L525.23 344.94 L527.35 344.93 L528.67 345.45 L529.90 345.36 L532.05 346.35 L534.02 346.19 L536.12 346.75 L537.77 346.51 L538.83 346.45 L540.38 346.47 L542.15 345.54 L543.21 346.50 L544.36 345.92 L545.77 345.37 L547.66 346.54 L548.97 346.31 L550.33 346.03 L551.81 345.15 L553.00 344.92 L555.09 345.42 L556.35 346.42 L558.55 345.85 L559.71 345.14 L560.82 345.19 L561.93 345.00 L563.24 345.59 L565.31 346.16 L566.80 345.69 L568.43 345.45 L569.84 344.74 L571.17 346.30 L572.32 345.92 L574.08 346.50 L575.34 345.52 L576.63 345.44 L578.17 346.52 L580.19 346.73 L581.21 345.13 L583.07 346.29 L584.63 346.08 L585.63 345.62 L587.75 346.32 L589.77 346.86 L591.07 345.32 L592.26 345.61 L594.07 346.55 L595.94 346.29 L597.86 345.82 L599.52 344.82 L601.46 344.86 L603.56 345.70 L604.93 344.95 L606.23 345.71 L608.07 344.93 L609.15 345.48 L610.85 345.40 L612.12 345.80 L613.13 345.34 L614.69 346.49 L616.46 346.74 L618.03 345.54 L619.33 346.56 L621.17 345.62 L622.20 345.67 L624.01 345.53 L625.32 345.97 L627.43 345.25 L628.47 345.22 L629.97 345.90 L631.21 346.36 L633.10 345.94 L634.34 346.72 L635.72 346.70 L636.99 345.49 L638.91 345.22 L641.05 345.52 L642.27 345.08 L643.77 345.82 L645.91 345.03 L647.38 344.89 L649.55 344.70 L650.61 344.47 L652.09 346.07 L654.15 346.29 L656.34 346.77 L657.74 345.45 L659.86 346.10 L660.90 346.17 L662.35 345.61 L663.75 345.01 L664.76 345.02 L666.18 346.37 L667.33 346.86 L668.58 345.82 L670.56 346.39 L672.08 345.04 L673.65 345.21 L675.75 344.92 L677.19 346.22 L678.23 345.70 L680.20 346.23 L681.25 344.96 L682.32 346.28 L683.63 346.40 L685.71 345.62 L687.04 346.59 L688.78 345.54 L690.64 345.28 L691.97 344.56 L693.87 346.13 L695.64 346.74 L696.66 345.53 L698.23 346.55 L700.00 345.70" stroke="#1c1c1c" stroke-width="1" fill="none" stroke-linejoin="round"/>
<path d="M134.6 388V433" stroke="#666" stroke-width="1.6"/>

<!-- cursors -->
<path d="M135.2 96V470" stroke="#ff5c5c" stroke-width="1.6" stroke-dasharray="2.6 2.3" fill="none"/>
<path d="M198.8 96V470" stroke="#111" stroke-width="1.1" stroke-dasharray="2.8 2.2" fill="none"/>
<!-- orange arrow -->
<path d="M137.2 259.5L146 254.5V258H187V254.5L195.8 259.5L187 264.5V261H146V264.5Z" fill="#ff5a00"/>

<!-- labels -->
<g class="lbl">
<text x="37.5" y="107.7">+20V</text>
<text x="190.6" y="107.7">CKPS</text>
<text x="282.3" y="107.7" textLength="65.5">Cur A : 4.6 V</text>
<text x="400.4" y="107.7" textLength="57">Avg : -0.9 V</text>
<text x="519.3" y="107.7" textLength="65">Cur B : 0.2 V</text>
<text x="36.7" y="274.7">-20V</text>
<text x="37.3" y="297.6">+8V</text>
<text x="183.5" y="297.7" textLength="45.4">CMPS-IN</text>
<text x="281.5" y="297.7" textLength="74.5">Cur A : -0.02 V</text>
<text x="399.3" y="297.7" textLength="61">Avg : 4.65 V</text>
<text x="519.3" y="297.7" textLength="71">Cur B : 4.72 V</text>
<text x="36.7" y="464.6">-2V</text>
<text x="126" y="467.5" fill="#ee2222" style="fill:#ee2222">A</text>
<text x="189.8" y="467.5">B</text>
</g>

<!-- plot buttons -->
<g id="pbtn">
<rect x="639.5" y="101.5" width="12.5" height="12" fill="#fff" stroke="#cfcbc3" stroke-width="1"/>
<path d="M639.5 113.5V101.5H652" stroke="#4a6cc0" stroke-width="1.2" fill="none"/>
<rect x="655.3" y="99.6" width="18.5" height="17.8" rx="0.8" fill="url(#bg2)" stroke="#8393bd" stroke-width="0.9"/>
<rect x="676.5" y="99.6" width="18.5" height="17.8" rx="0.8" fill="url(#bg2)" stroke="#8393bd" stroke-width="0.9"/>
<path d="M654.8 99.1h2v0.9h-1.1v1.1h-0.9zM674.3 99.1h-2v0.9h1.1v1.1h0.9zM654.8 117.9h2v-0.9h-1.1v-1.1h-0.9zM674.3 117.9h-2v-0.9h1.1v-1.1h0.9z" fill="#1f3f8c"/>
<path d="M676 99.1h2v0.9h-1.1v1.1h-0.9zM695.5 99.1h-2v0.9h1.1v1.1h0.9zM676 117.9h2v-0.9h-1.1v-1.1h-0.9zM695.5 117.9h-2v-0.9h1.1v-1.1h0.9z" fill="#1f3f8c"/>
<path d="M662.7 103.5h3.6v3.4h3.4v3.6h-3.4v3.4h-3.6v-3.4h-3.4v-3.6h3.4z" fill="#a9adb6" stroke="#8d919b" stroke-width="0.6"/>
<line x1="680.5" y1="103.5" x2="691" y2="114" stroke="#a6aab4" stroke-width="2.3"/>
<line x1="691" y1="103.5" x2="680.5" y2="114" stroke="#a6aab4" stroke-width="2.3"/>
<line x1="680.7" y1="103.7" x2="690.8" y2="113.8" stroke="#eef0f5" stroke-width="0.9"/>
<line x1="690.8" y1="103.7" x2="680.7" y2="113.8" stroke="#eef0f5" stroke-width="0.9"/>
</g>
<use href="#pbtn" y="189.8"/>
</svg>
</div>
</body></html>
